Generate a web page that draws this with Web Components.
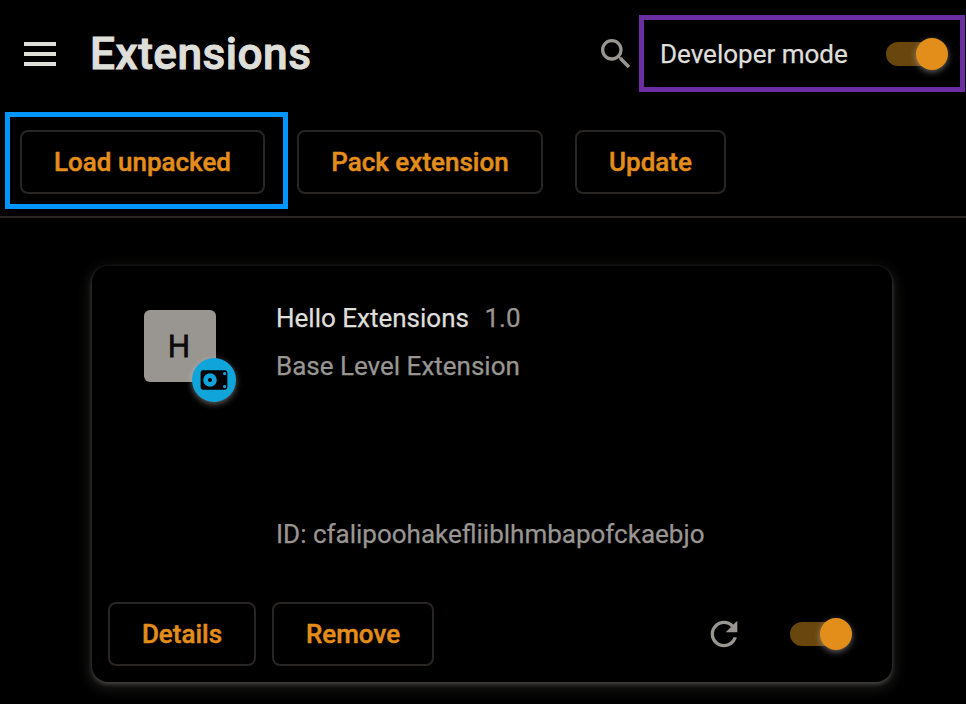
<!DOCTYPE html>
<html lang="en">
<head>
<meta charset="utf-8">
<title>Extensions</title>
<style>
html, body { margin: 0; background: #000; }
body { width: 966px; height: 704px; overflow: hidden; font: 400 26px/32px Roboto, sans-serif; color: #dfdfda; -webkit-text-stroke: .25px; }
</style>
</head>
<body>
<extensions-page></extensions-page>
<script>
class BaseElement extends HTMLElement {
  render(html) { this.attachShadow({ mode: 'open' }).innerHTML = html; }
}

customElements.define('action-button', class extends BaseElement {
  connectedCallback() {
    this.render(`<style>
      :host { display: block; flex: none; }
      button { display: block; box-sizing: border-box; width: 100%; height: 64px; padding: 0; background: none;
        border: 2px solid #282522; border-radius: 8px; color: #e38d1b; font: 500 26px/58px Roboto, sans-serif; white-space: nowrap; -webkit-text-stroke: .45px; }
    </style><button><slot></slot></button>`);
  }
});

customElements.define('toggle-switch', class extends BaseElement {
  connectedCallback() {
    this.render(`<style>
      :host { display: flex; align-items: center; flex: none; width: 62px; height: 32px; }
      .bar { width: 56px; height: 24px; border-radius: 12px; background: #68460e; }
      .knob { width: 32px; height: 32px; margin-left: -26px; border-radius: 50%; background: #e38d1b; box-shadow: 0 2px 6px rgba(223,218,212,.45); }
    </style><div class="bar"></div><div class="knob"></div>`);
  }
});

customElements.define('ui-icon', class extends BaseElement {
  connectedCallback() {
    const shapes = {
      menu: ['0 0 32 24', '<path d="M0 0h32v4H0zM0 10h32v4H0zM0 20h32v4H0z"/>'],
      search: ['0 0 24 24', '<path d="M15.5 14h-.79l-.28-.27A6.471 6.471 0 0 0 16 9.5 6.5 6.5 0 1 0 9.5 16c1.61 0 3.09-.59 4.23-1.57l.27.28v.79l5 4.99L20.49 19l-4.99-5zm-6 0C7.01 14 5 11.99 5 9.5S7.01 5 9.5 5 14 7.01 14 9.5 11.99 14 9.5 14z"/>'],
      reload: ['0 0 24 24', '<path d="M17.65 6.35C16.2 4.9 14.21 4 12 4c-4.42 0-7.99 3.58-7.99 8s3.57 8 7.99 8c3.73 0 6.84-2.55 7.73-6h-2.08c-.82 2.33-3.04 4-5.65 4-3.31 0-6-2.69-6-6s2.69-6 6-6c1.66 0 3.14.69 4.22 1.78L13 11h7V4l-2.35 2.35z"/>'],
      drive: ['0 0 28 20', '<path fill-rule="evenodd" d="M3 .3h22a2.4 2.4 0 0 1 2.4 2.4v14.6a2.4 2.4 0 0 1-2.4 2.4H3a2.4 2.4 0 0 1-2.4-2.4V2.7A2.4 2.4 0 0 1 3 .3zM10 3.2a6.8 6.8 0 1 0 0 13.6a6.8 6.8 0 0 0 0-13.6zM24.6 2a1.6 1.6 0 1 0 0 3.2a1.6 1.6 0 0 0 0-3.2zM24.6 15a1.6 1.6 0 1 0 0 3.2a1.6 1.6 0 0 0 0-3.2z"/><circle cx="10" cy="10" r="2"/>']
    };
    const [box, body] = shapes[this.getAttribute('name')];
    this.render(`<style>:host { display: block; flex: none; } svg { display: block; width: 100%; height: 100%; }</style>
      <svg viewBox="${box}" fill="currentColor">${body}</svg>`);
  }
});

customElements.define('callout-frame', class extends BaseElement {
  connectedCallback() {
    this.render(`<style>
      :host { display: block; position: relative; flex: none; }
      .frame { position: absolute; inset: var(--inset); border: 5px solid var(--frame); pointer-events: none; }
    </style><slot></slot><div class="frame"></div>`);
  }
});

customElements.define('page-header', class extends BaseElement {
  connectedCallback() {
    this.render(`<style>
      :host { display: flex; align-items: center; height: 108px; padding: 0 18px 0 24px; box-sizing: border-box; }
      .menu { width: 32px; height: 24px; }
      h1 { margin: 0 0 0 34px; flex: 1; font: 500 44.2px/52px Roboto, sans-serif; letter-spacing: .48px; white-space: nowrap; -webkit-text-stroke: 1px; }
      .search { width: 40px; height: 40px; color: #999692; margin-right: 24px; }
      callout-frame { --inset: -16px -17px -15px -21px; --frame: #6a2da2; }
      .mode { display: flex; align-items: center; justify-content: space-between; width: 288px; height: 46px; white-space: nowrap; }
    </style>
    <ui-icon class="menu" name="menu"></ui-icon>
    <h1>Extensions</h1>
    <ui-icon class="search" name="search"></ui-icon>
    <callout-frame><div class="mode"><span>Developer mode</span><toggle-switch></toggle-switch></div></callout-frame>`);
  }
});

customElements.define('developer-toolbar', class extends BaseElement {
  connectedCallback() {
    this.render(`<style>
      :host { display: flex; align-items: center; gap: 32px; height: 110px; padding-left: 20px; box-sizing: border-box; border-bottom: 2px solid #282522; }
      callout-frame { --inset: -18px -23px -15px -15px; --frame: #0094ff; }
    </style>
    <callout-frame><action-button style="width:245px">Load unpacked</action-button></callout-frame>
    <action-button style="width:246px">Pack extension</action-button>
    <action-button style="width:151px">Update</action-button>`);
  }
});

customElements.define('extension-card', class extends BaseElement {
  connectedCallback() {
    this.render(`<style>
      :host { display: flex; flex-direction: column; box-sizing: border-box; width: 800px; height: 416px; border-radius: 16px; background: #000; padding: 36px 16px 16px;
        box-shadow: 0 2px 4px rgba(223,218,212,.26), 0 4px 12px 4px rgba(223,218,212,.11); }
      .main { display: flex; flex: 1; padding-left: 36px; }
      .logo { position: relative; width: 72px; height: 72px; margin: 8px 60px 0 0; border-radius: 6px; background: #999692; color: #0c0c0b;
        font: 400 31px/71px "Open Sans", sans-serif; text-align: center; -webkit-text-stroke: 1px; }
      .logo span { position: relative; left: -1px; }
      .badge { position: absolute; left: 48px; top: 48px; width: 44px; height: 44px; border-radius: 50%; display: grid; place-items: center; background: #10a5da; color: #000; box-shadow: 0 2px 6px rgba(223,218,212,.45); }
      .badge ui-icon { width: 28px; height: 20px; }
      .text { color: #999692; white-space: nowrap; }
      .title { display: flex; gap: 15.5px; }
      .title b { font-weight: 400; color: #dfdfda; }
      .desc { margin-top: 16px; }
      .id { margin-top: 136px; }
      .actions { display: flex; align-items: center; }
      .remove { margin-left: 16px; }
      .reload { width: 40px; height: 40px; color: #999692; margin: 0 46px 0 auto; }
      toggle-switch { margin-right: 24px; }
    </style>
    <div class="main">
      <div class="logo"><span>H</span><div class="badge"><ui-icon name="drive"></ui-icon></div></div>
      <div class="text">
        <div class="title"><b><slot name="name"></slot></b><slot name="version"></slot></div>
        <div class="desc"><slot name="description"></slot></div>
        <div class="id"><slot name="id"></slot></div>
      </div>
    </div>
    <div class="actions">
      <action-button style="width:148px">Details</action-button>
      <action-button class="remove" style="width:162px">Remove</action-button>
      <ui-icon class="reload" name="reload"></ui-icon>
      <toggle-switch></toggle-switch>
    </div>`);
  }
});

customElements.define('extensions-page', class extends BaseElement {
  connectedCallback() {
    this.render(`<style>
      :host { display: block; width: 966px; height: 704px; }
      main { padding: 48px 0 0 92px; }
    </style>
    <page-header></page-header>
    <developer-toolbar></developer-toolbar>
    <main><extension-card>
      <span slot="name">Hello Extensions</span><span slot="version">1.0</span>
      <span slot="description">Base Level Extension</span>
      <span slot="id">ID: cfalipoohakefliiblhmbapofckaebjo</span>
    </extension-card></main>`);
  }
});
</script>
</body>
</html>
